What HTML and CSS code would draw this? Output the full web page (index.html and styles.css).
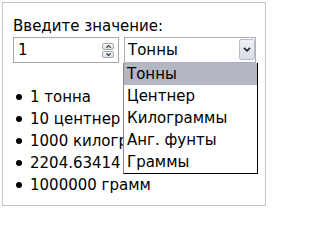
FILE: index.html
```html
<!DOCTYPE html>
<html lang="ru">
<head>
<meta charset="utf-8">
<link rel="stylesheet" href="styles.css">
</head>
<body>
<div class="frame">
  <div class="label">Введите значение:</div>
  <div class="controls">
    <div class="numbox">
      <span class="value">1</span>
      <div class="spin">
        <div class="spin-btn"><svg width="5" height="3" viewBox="0 0 5 3"><path d="M0.3 2.7 L2.5 0.5 L4.7 2.7" fill="none" stroke="#3a3a3a" stroke-width="1.2"/></svg></div>
        <div class="spin-btn"><svg width="5" height="3" viewBox="0 0 5 3"><path d="M0.3 0.3 L2.5 2.5 L4.7 0.3" fill="none" stroke="#3a3a3a" stroke-width="1.2"/></svg></div>
      </div>
    </div>
    <div class="selectwrap">
      <div class="select">
        <span class="value">Тонны</span>
        <div class="arrow"><svg width="8" height="5" viewBox="0 0 8 5"><path d="M1 0.8 L4 3.8 L7 0.8" fill="none" stroke="#2b2b2b" stroke-width="1.8"/></svg></div>
      </div>
      <ul class="options">
        <li class="selected">Тонны</li>
        <li>Центнер</li>
        <li>Килограммы</li>
        <li>Анг. фунты</li>
        <li>Граммы</li>
      </ul>
    </div>
  </div>
  <ul class="results">
    <li>1 тонна</li>
    <li class="clip">10 центнер</li>
    <li class="clip">1000 килогр</li>
    <li class="clip">2204.63414</li>
    <li>1000000 грамм</li>
  </ul>
</div>
</body>
</html>
```

FILE: styles.css
```css
html, body {
  margin: 0;
  padding: 0;
  background: #ffffff;
}

body {
  font-family: "DejaVu Sans", sans-serif;
  font-size: 15px;
  color: #000000;
}

.frame {
  box-sizing: border-box;
  width: 264px;
  height: 204px;
  margin: 2px;
  border: 1px solid #c4c4c4;
  padding: 12px 0 0 10px;
  overflow: hidden;
}

.label {
  line-height: 22px;
  white-space: nowrap;
}

.controls {
  display: flex;
  align-items: flex-start;
  gap: 5px;
}

.numbox {
  box-sizing: border-box;
  width: 106px;
  height: 26px;
  border: 1px solid #a7a7a7;
  display: flex;
  align-items: center;
  justify-content: space-between;
  padding: 0 4px 0 4px;
}

.value {
  line-height: 22px;
}

.spin {
  display: flex;
  flex-direction: column;
  gap: 1px;
}

.spin-btn {
  box-sizing: border-box;
  width: 12px;
  height: 7px;
  border: 1px solid #a3a9b4;
  border-radius: 2px;
  background: linear-gradient(#f7f8fa, #dde0e6);
  display: flex;
  align-items: center;
  justify-content: center;
}

.selectwrap {
  position: relative;
}

.select {
  box-sizing: border-box;
  width: 132px;
  height: 26px;
  border: 1px solid #a9b0ba;
  display: flex;
  align-items: center;
  justify-content: space-between;
  padding: 0 0 0 3px;
}

.arrow {
  box-sizing: border-box;
  align-self: flex-start;
  margin-top: 1px;
  width: 16px;
  height: 21px;
  border: 1px solid #b9bfca;
  border-radius: 2px;
  background: linear-gradient(#eef0f4, #d9dde5);
  display: flex;
  align-items: center;
  justify-content: center;
}

.options {
  position: absolute;
  top: 26px;
  left: -1px;
  z-index: 2;
  box-sizing: border-box;
  width: 135px;
  margin: 0;
  padding: 0;
  list-style: none;
  background: #ffffff;
  border: 1px solid #000000;
  border-top: none;
  border-left-color: #8a8a8a;
}

.options li {
  height: 22px;
  line-height: 22px;
  padding-left: 3px;
  white-space: nowrap;
}

.options li.selected {
  background: #b4b6c2;
}

.results {
  list-style: none;
  margin: 23px 0 0 0;
  padding: 0;
}

.results li {
  position: relative;
  line-height: 22px;
  padding-left: 17px;
  white-space: nowrap;
}

.results li.clip {
  box-sizing: border-box;
  width: 110px;
  overflow: hidden;
}

.results li::before {
  content: "";
  position: absolute;
  left: 3px;
  top: 8px;
  width: 6px;
  height: 6px;
  border-radius: 50%;
  background: #000000;
}
```
